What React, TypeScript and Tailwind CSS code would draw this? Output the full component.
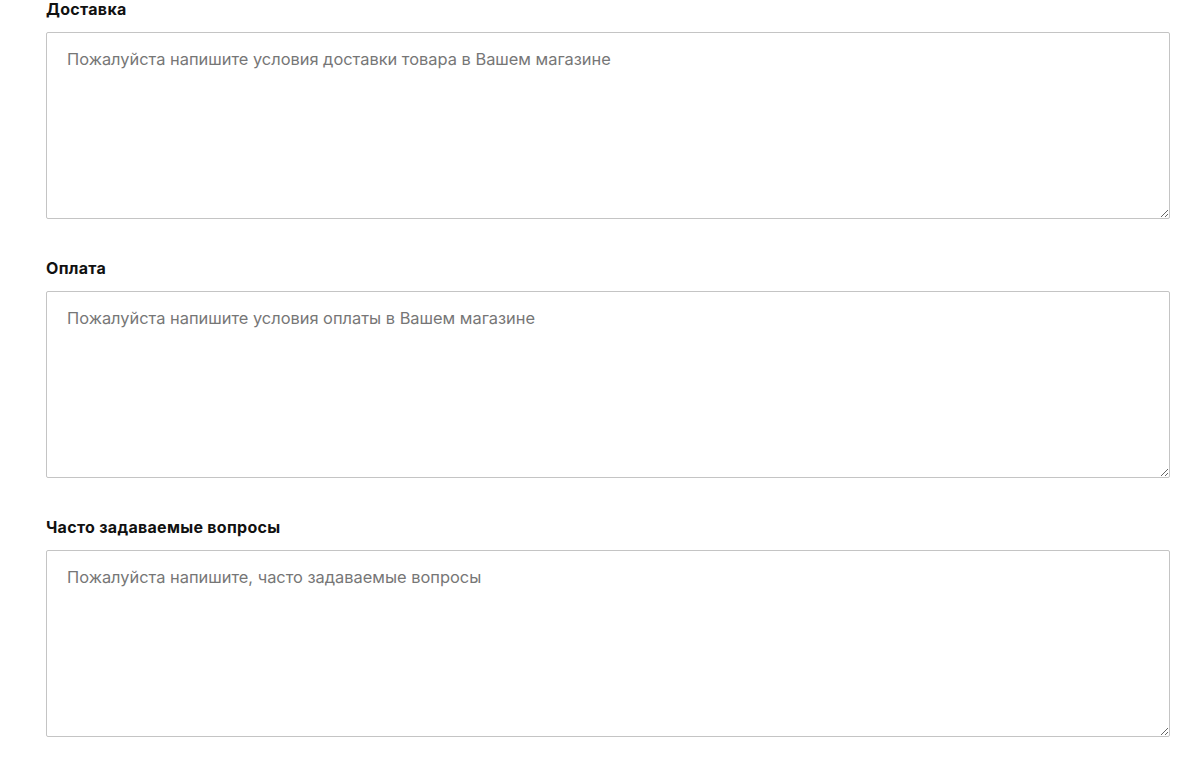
import React from "react";

const fields = [
  { label: "Доставка", ph: "Пожалуйста напишите условия доставки товара в Вашем магазине" },
  { label: "Оплата", ph: "Пожалуйста напишите условия оплаты в Вашем магазине" },
  { label: "Часто задаваемые вопросы", ph: "Пожалуйста напишите, часто задаваемые вопросы" },
];

export default function App() {
  return (
    <div className="min-h-[763px] bg-white pl-[46px] pr-[34px] font-['Inter',sans-serif]">
      <div className="flex flex-col gap-[40px]">
        {fields.map((f) => (
          <div key={f.label} className="flex flex-col">
            <label className="h-[20px] mb-[12px] text-[16px] leading-[19px] tracking-[0.3px] font-bold text-[#111]">
              {f.label}
            </label>
            <textarea
              placeholder={f.ph}
              className="block w-full h-[187px] border border-[#c4c4c4] rounded-[2px] px-[20px] pt-[14px] text-[16.4px] leading-[24px] text-[#333] placeholder:text-[#767676] outline-none font-['Inter',sans-serif]"
            />
          </div>
        ))}
      </div>
    </div>
  );
}
